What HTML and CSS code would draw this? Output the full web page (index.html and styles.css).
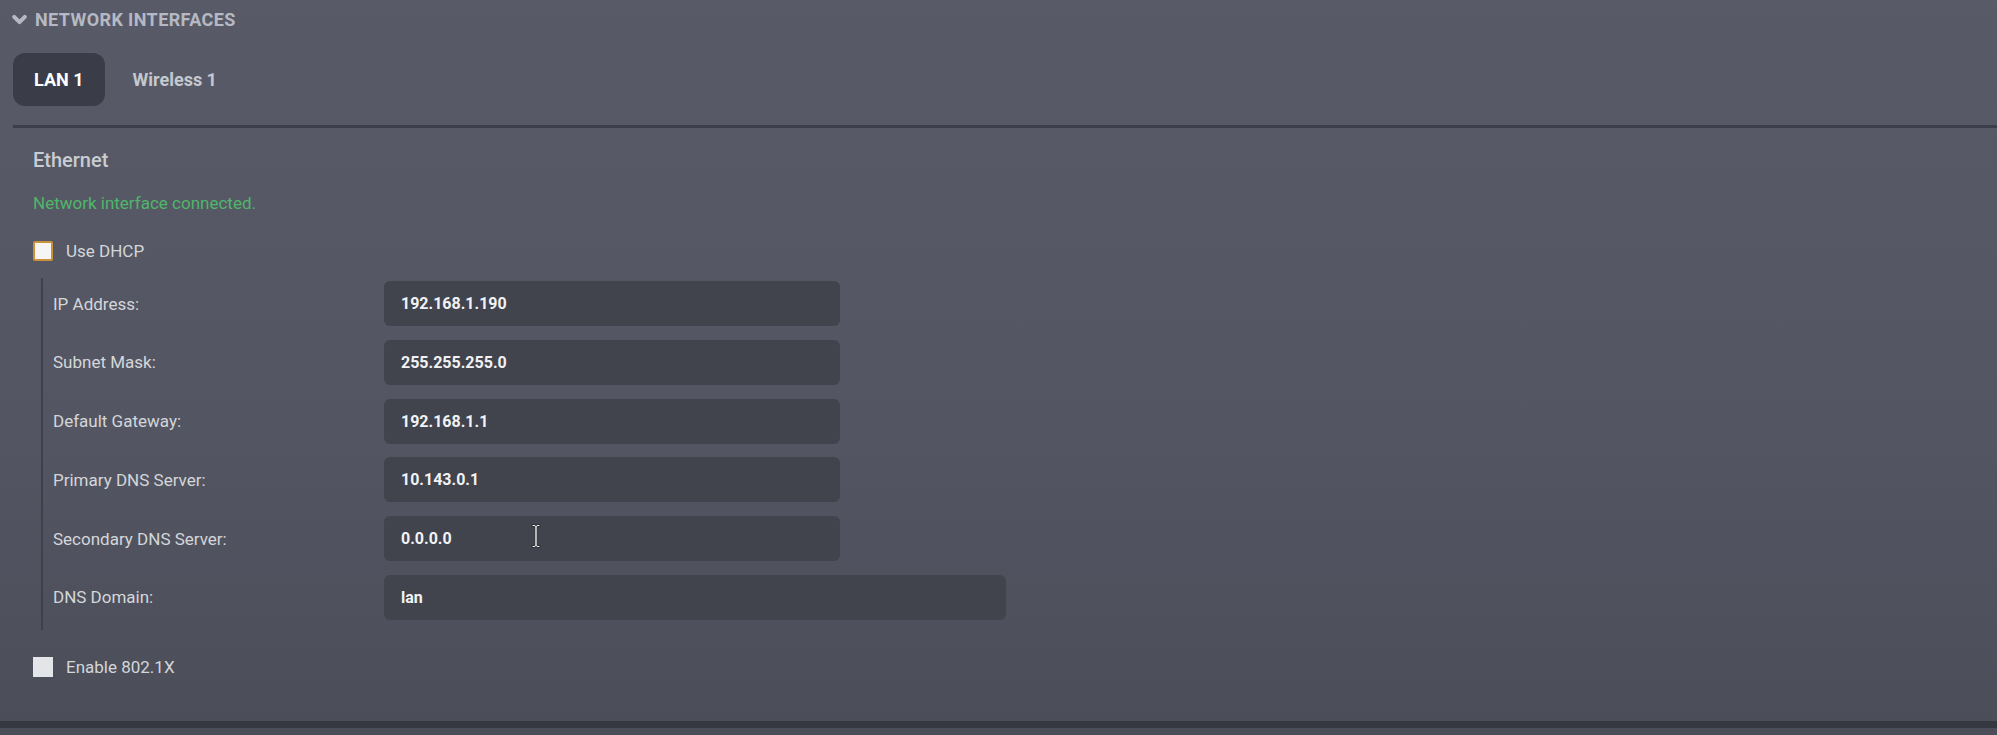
FILE: index.html
```html
<!DOCTYPE html>
<html>
<head>
<meta charset="utf-8">
<link rel="stylesheet" href="styles.css">
</head>
<body>
<div class="section">
  <div class="header">
    <svg class="chev" width="15" height="12" viewBox="0 0 15 12"><path d="M2.2 2.8 L7.5 8.1 L12.8 2.8" fill="none" stroke="#b6b9c3" stroke-width="4" stroke-linecap="round" stroke-linejoin="round"/></svg>
    <span>NETWORK INTERFACES</span>
  </div>
  <div class="tabs">
    <div class="tab active">LAN 1</div>
    <div class="tab">Wireless 1</div>
  </div>
  <div class="rule"></div>
  <div class="content">
    <div class="title">Ethernet</div>
    <div class="status">Network interface connected.</div>
    <div class="check-row">
      <div class="box dhcp"></div>
      <span>Use DHCP</span>
    </div>
    <div class="fields">
      <div class="label">IP Address:</div>
      <div class="input w1">192.168.1.190</div>
      <div class="label">Subnet Mask:</div>
      <div class="input w1">255.255.255.0</div>
      <div class="label">Default Gateway:</div>
      <div class="input w1">192.168.1.1</div>
      <div class="label">Primary DNS Server:</div>
      <div class="input w1">10.143.0.1</div>
      <div class="label">Secondary DNS Server:</div>
      <div class="input w1">0.0.0.0</div>
      <div class="label">DNS Domain:</div>
      <div class="input w2">lan</div>
    </div>
    <div class="check-row last">
      <div class="box plain"></div>
      <span>Enable 802.1X</span>
    </div>
  </div>
</div>
<svg class="cursor" width="12" height="26" viewBox="0 0 12 26"><path d="M2 1.5 H5 Q6 1.5 6 3 Q6 1.5 7 1.5 H10 V3.5 H7.2 V22.5 H10 V24.5 H7 Q6 24.5 6 23 Q6 24.5 5 24.5 H2 V22.5 H4.8 V3.5 H2 Z" fill="#f4f4f4" stroke="#2a2c33" stroke-width="1"/></svg>
</body>
</html>
```
FILE: styles.css
```css
html, body {
  margin: 0;
  padding: 0;
}
body {
  position: relative;
  width: 1997px;
  height: 735px;
  overflow: hidden;
  background: linear-gradient(#585b67 0%, #535662 60%, #4b4e59 100%);
  font-family: Roboto, "Liberation Sans", sans-serif;
}
.section {
  box-sizing: border-box;
  height: 728px;
  border-bottom: 7px solid #353841;
}
.header {
  display: flex;
  align-items: center;
  gap: 8px;
  padding: 10px 0 0 12px;
  height: 20px;
  line-height: 20px;
  font-size: 18px;
  letter-spacing: 0.4px;
  font-weight: 700;
  color: #b6b9c3;
}
.chev {
  display: block;
  margin-top: 0;
}
.tabs {
  display: flex;
  gap: 7px;
  margin: 23px 0 0 13px;
}
.tab {
  height: 53px;
  padding: 0 21px;
  border-radius: 12px;
  display: flex;
  align-items: center;
  font-size: 18px;
  font-weight: 700;
  color: #c5c8ce;
}
.tab.active {
  background: #3a3d47;
  color: #ffffff;
}
.rule {
  margin: 19px 0 0 13px;
  border-top: 3px solid #3c3f49;
}
.content {
  padding-left: 33px;
}
.title {
  margin-top: 20px;
  font-size: 20px;
  font-weight: 500;
  line-height: 24px;
  color: #c9ccd2;
}
.status {
  margin-top: 21px;
  font-size: 17px;
  line-height: 20px;
  color: #4fb66a;
}
.check-row {
  display: flex;
  align-items: center;
  gap: 13px;
  margin-top: 28px;
  height: 20px;
  font-size: 17px;
  line-height: 20px;
  color: #d4d6da;
}
.check-row.last {
  margin-top: 27px;
}
.box {
  width: 20px;
  height: 20px;
  box-sizing: border-box;
  flex: none;
}
.box.dhcp {
  border: 2px solid #c9923a;
  background: #f5f5f5;
  border-radius: 2px;
}
.box.plain {
  background: #e4e5e8;
}
.fields {
  margin: 17px 0 0 8px;
  border-left: 2px solid #3e414a;
  padding: 3px 0 10px 10px;
  display: grid;
  grid-template-columns: 331px auto;
  row-gap: 13.8px;
  align-items: center;
  justify-items: start;
}
.label {
  font-size: 17px;
  line-height: 20px;
  color: #d4d6da;
}
.input {
  height: 45px;
  box-sizing: border-box;
  border-radius: 6px;
  background: #41444d;
  padding-left: 17px;
  display: flex;
  align-items: center;
  font-size: 16px;
  font-weight: 700;
  color: #f2f2f4;
}
.w1 {
  width: 456px;
}
.w2 {
  width: 622px;
}
.cursor {
  position: absolute;
  left: 530px;
  top: 523px;
}
```
